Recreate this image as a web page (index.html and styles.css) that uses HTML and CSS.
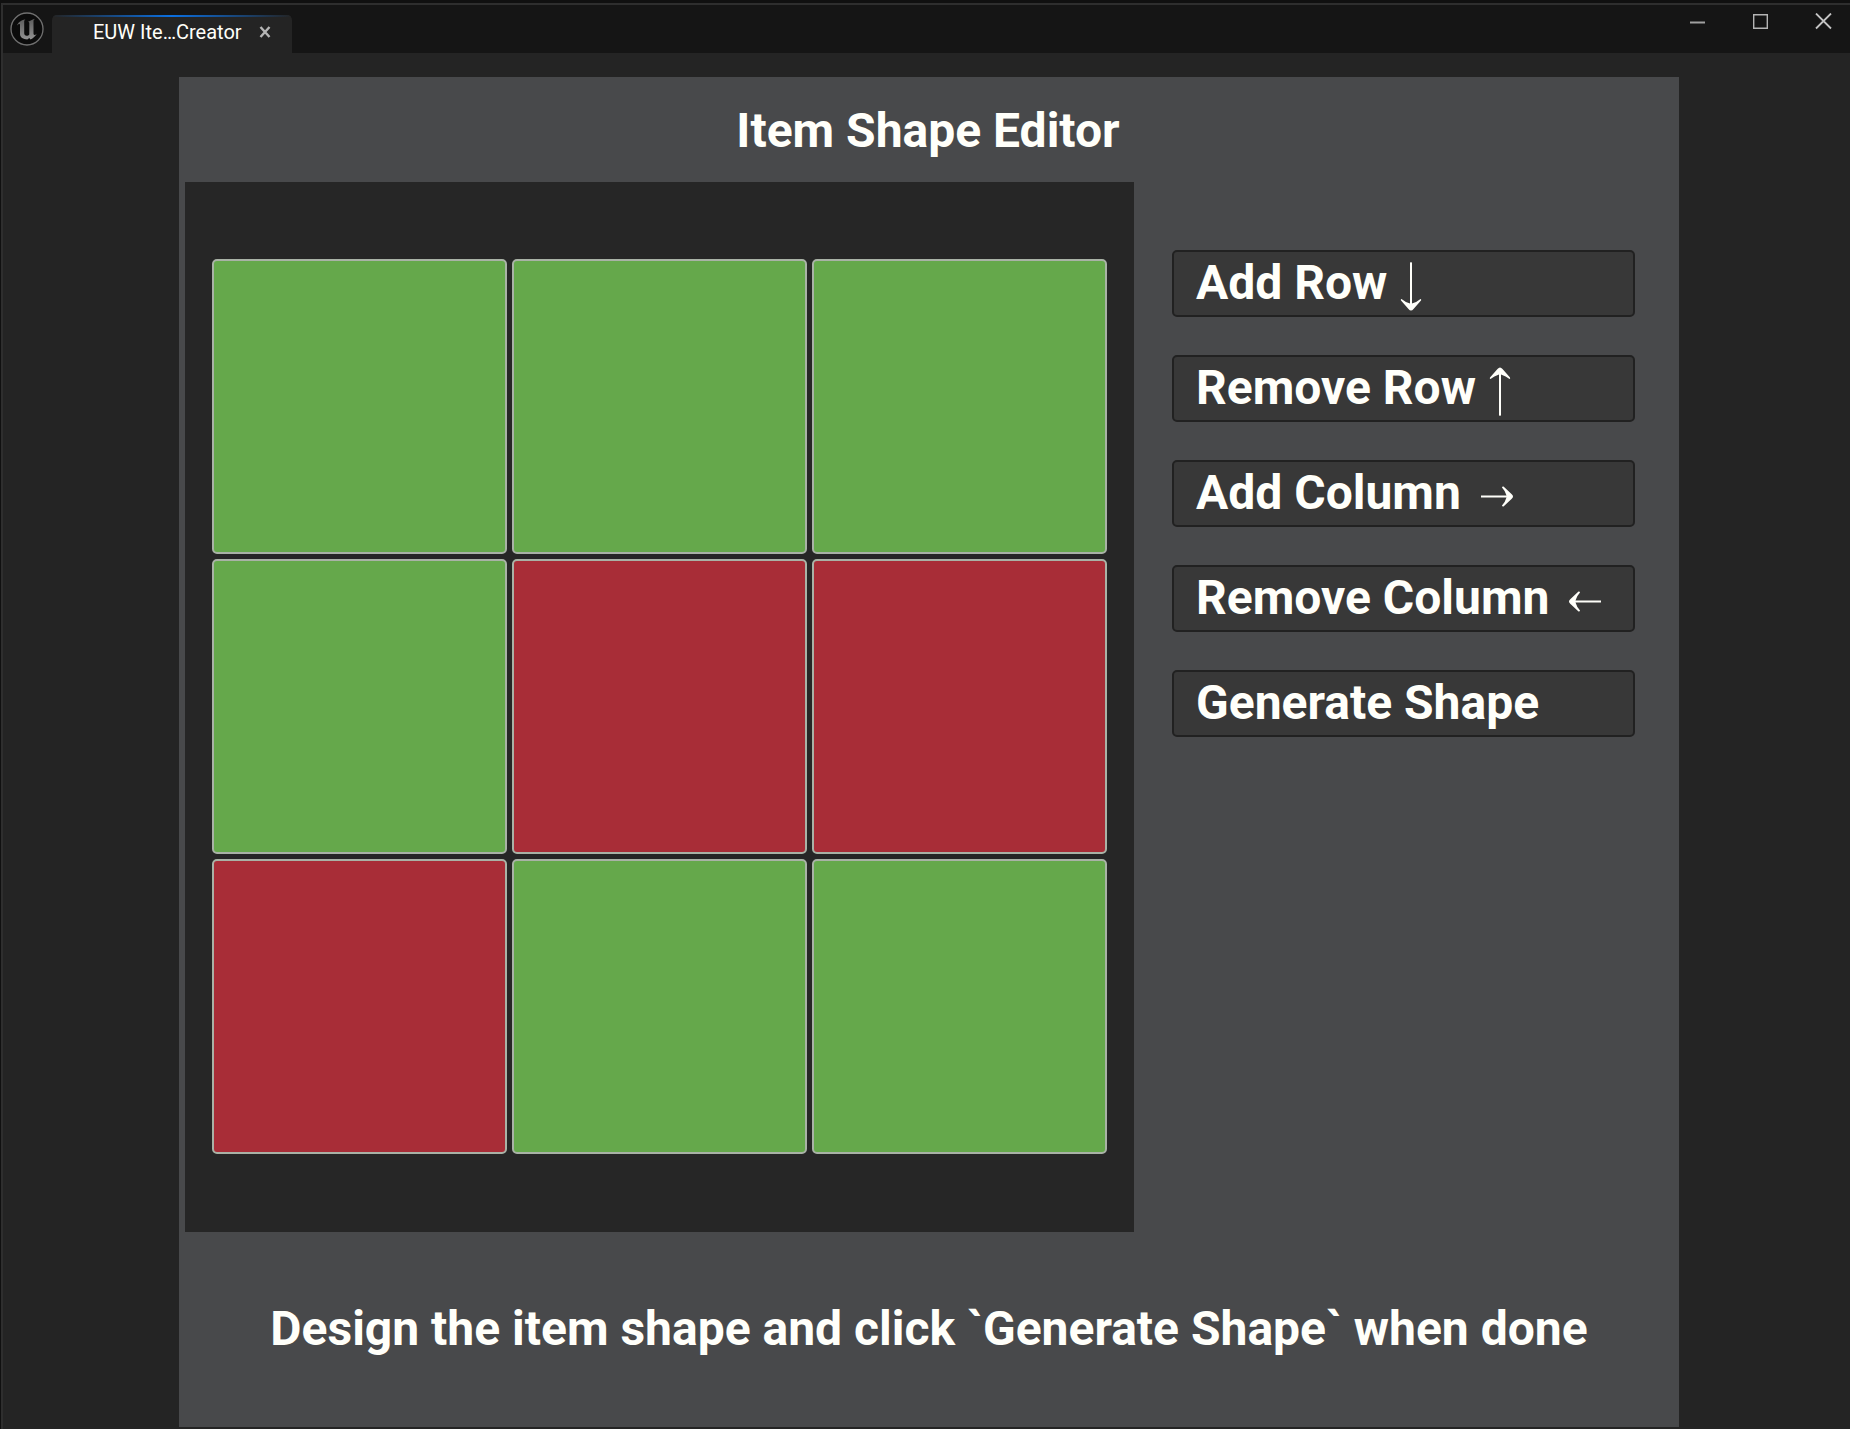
FILE: index.html
```html
<!DOCTYPE html>
<html lang="en">
<head>
<meta charset="utf-8">
<meta name="viewport" content="width=device-width, initial-scale=1">
<title>Item Shape Editor</title>
<link rel="stylesheet" href="styles.css">
</head>
<body>
<div class="window">
  <header class="titlebar">
    <svg class="logo" viewBox="0 0 36 36" aria-hidden="true">
      <defs>
        <linearGradient id="metal" x1="0" y1="0" x2="0" y2="1">
          <stop offset="0" stop-color="#5c5c5c"/>
          <stop offset="1" stop-color="#929292"/>
        </linearGradient>
      </defs>
      <circle cx="18" cy="18" r="16" fill="#0b0b0b" stroke="#707070" stroke-width="1.3"/>
      <path fill="url(#metal)" d="M8 14.500C9.200 11.500 11.500 9.500 16.500 8.200C15.500 9 15.200 9.600 15.200 10.800V22.300C15.200 23.800 16.200 24.700 17.600 24.700C18.900 24.700 19.800 24.100 20.300 23.400V12.200C20.300 11.200 19.800 10.700 18.800 10.700C20.600 10 22.700 8.800 26 7.700C24.800 8.600 24.500 9.200 24.500 10.200V22.300C24.500 23.500 24.900 24 25.500 24C26.200 24 26.900 23.600 27.800 22.800C26.500 25.400 24.200 27.300 21.500 28.400L20.300 27.100L18.300 28.500C14.300 28.300 11 26.600 11 23.100V14C11 13.200 10.700 12.900 10.200 12.900C9.500 12.900 8.800 13.500 8 14.500Z"/>
    </svg>
    <div class="tab">
      <span class="tab-label">EUW Ite…Creator</span>
      <button class="tab-close" type="button" aria-label="Close tab">
        <svg viewBox="0 0 12 12" aria-hidden="true"><path d="M1.500 1L10.500 11M10.500 1L1.500 11" stroke="#b4b4b4" stroke-width="2.400"/></svg>
      </button>
    </div>
    <div class="controls">
      <button type="button" aria-label="Minimize"><svg viewBox="0 0 17 17" aria-hidden="true"><path d="M1 9.500H16" stroke="#a0a0a0" stroke-width="2"/></svg></button>
      <button type="button" aria-label="Maximize"><svg viewBox="0 0 17 17" aria-hidden="true"><path d="M1.700 1.700H15.300V15.300H1.700Z" fill="none" stroke="#b4b4b4" stroke-width="1.400"/></svg></button>
      <button type="button" aria-label="Close"><svg viewBox="0 0 17 17" aria-hidden="true"><path d="M1 .500L16 15.500M16 .500L1 15.500" stroke="#c4c4c4" stroke-width="1.800"/></svg></button>
    </div>
  </header>
  <main class="stage">
    <section class="panel">
      <h1 class="heading">Item Shape Editor</h1>
      <div class="editor">
        <div class="board">
          <button class="cell on" type="button" aria-label="Row 1, column 1" aria-pressed="true"></button>
          <button class="cell on" type="button" aria-label="Row 1, column 2" aria-pressed="true"></button>
          <button class="cell on" type="button" aria-label="Row 1, column 3" aria-pressed="true"></button>
          <button class="cell on" type="button" aria-label="Row 2, column 1" aria-pressed="true"></button>
          <button class="cell" type="button" aria-label="Row 2, column 2" aria-pressed="false"></button>
          <button class="cell" type="button" aria-label="Row 2, column 3" aria-pressed="false"></button>
          <button class="cell" type="button" aria-label="Row 3, column 1" aria-pressed="false"></button>
          <button class="cell on" type="button" aria-label="Row 3, column 2" aria-pressed="true"></button>
          <button class="cell on" type="button" aria-label="Row 3, column 3" aria-pressed="true"></button>
        </div>
        <div class="actions">
          <button class="action" type="button">Add Row <svg class="arrow-v" viewBox="0 0 24 49" aria-hidden="true"><path d="M11 1Q12 -1 13 1V41.500Q18 40 21.500 37Q22.500 37 22 38.500L14.500 47Q12 50 9.500 47L2 38.500Q1.500 37 2.500 37Q6 40 11 41.500Z"/></svg></button>
          <button class="action" type="button">Remove Row <svg class="arrow-v" viewBox="0 0 24 49" aria-hidden="true"><path d="M11 48Q12 50 13 48V7.500Q18 9 21.500 12Q22.500 12 22 10.500L14.500 2Q12 -1 9.500 2L2 10.500Q1.500 12 2.500 12Q6 9 11 7.500Z"/></svg></button>
          <button class="action" type="button">Add Column <svg class="arrow-h" viewBox="0 0 48 21" aria-hidden="true"><path d="M8 9.500H33.500Q32 4.500 29 1.500Q29 .3 30.500 .5L38.500 8Q41.500 10.500 38.500 13L30.500 20.500Q29 20.700 29 19.500Q32 16.500 33.500 11.500H8Z"/></svg></button>
          <button class="action" type="button">Remove Column <svg class="arrow-h" viewBox="0 0 48 21" aria-hidden="true"><path d="M40 9.500H14.500Q16 4.500 19 1.500Q19 .3 17.500 .5L9.500 8Q6.500 10.500 9.500 13L17.500 20.500Q19 20.700 19 19.500Q16 16.500 14.500 11.500H40Z"/></svg></button>
          <button class="action" type="button">Generate Shape</button>
        </div>
      </div>
      <p class="hint">Design the item shape and click `Generate Shape` when done</p>
    </section>
  </main>
</div>
</body>
</html>
```

FILE: styles.css
```css
* {
  box-sizing: border-box;
}

body {
  margin: 0;
  background: #101010;
  color: #fffffa;
  font-family: Roboto, "Liberation Sans", sans-serif;
}

button {
  margin: 0;
  padding: 0;
  border: 0;
  background: none;
  color: inherit;
  font: inherit;
}

svg {
  display: block;
}

.window {
  display: flex;
  flex-direction: column;
  min-height: 100vh;
  border-top: 3px solid #101010;
  border-left: 1px solid #101010;
}

.titlebar {
  display: flex;
  align-items: flex-start;
  height: 50px;
  border-top: 2px solid #2e2e2e;
  border-left: 2px solid #2e2e2e;
  background: #151515;
}

.logo {
  width: 36px;
  height: 36px;
  margin: 6px 7px 0 6px;
}

.tab {
  position: relative;
  display: flex;
  align-items: center;
  width: 240px;
  height: 38px;
  margin-top: 10px;
  padding: 0 21px 4px 41px;
  border-radius: 5px 5px 0 0;
  background: #242424;
  overflow: hidden;
}

.tab::before {
  content: "";
  position: absolute;
  inset: 0 0 auto;
  height: 2px;
  background: linear-gradient(90deg, #242424, #0b6fe0 50%, #242424);
}

.tab-label {
  font-size: 20px;
  line-height: 24px;
  white-space: nowrap;
}

.tab-close {
  margin-left: auto;
}

.tab-close svg {
  width: 12px;
  height: 12px;
}

.controls {
  display: flex;
  gap: 46px;
  margin: 8px 18px 0 auto;
}

.controls svg {
  width: 17px;
  height: 17px;
}

.stage {
  display: flex;
  flex: 1;
  padding: 24px 171px 2px 176px;
  border-left: 2px solid #2e2e2e;
  background: #242424;
}

.panel {
  display: flex;
  flex: 1;
  flex-direction: column;
  background: #48494b;
}

.heading,
.hint {
  margin: 0;
  font-size: 48px;
  font-weight: 700;
  line-height: 56px;
  text-align: center;
}

.heading {
  padding: 26px 2px 23px 0;
}

.editor {
  display: grid;
  grid-template-columns: minmax(0, 949fr) minmax(0, 545fr);
  padding-left: 6px;
}

.board {
  display: grid;
  grid-template-columns: repeat(3, 1fr);
  gap: 5px;
  padding: 77px 27px 78px;
  background: #262626;
}

.cell {
  aspect-ratio: 1;
  border: 2px solid #a9b2a6;
  border-radius: 5px;
  background: #a82d37;
}

.cell.on {
  background: #65a84b;
}

.actions {
  display: flex;
  flex-direction: column;
  gap: 38px;
  padding: 68px 44px 0 38px;
}

.action {
  height: 67px;
  padding: 0 22px 2px;
  border: 2px solid #212121;
  border-radius: 5px;
  background: #383838;
  font-size: 48px;
  font-weight: 700;
  line-height: 56px;
  text-align: left;
  white-space: nowrap;
}

.arrow-v,
.arrow-h {
  display: inline-block;
  fill: currentColor;
}

.arrow-v {
  width: 24px;
  height: 49px;
  vertical-align: -12px;
}

.arrow-h {
  width: 48px;
  height: 21px;
  vertical-align: 2px;
}

.hint {
  margin: auto 0;
  padding-bottom: 2px;
}
```
